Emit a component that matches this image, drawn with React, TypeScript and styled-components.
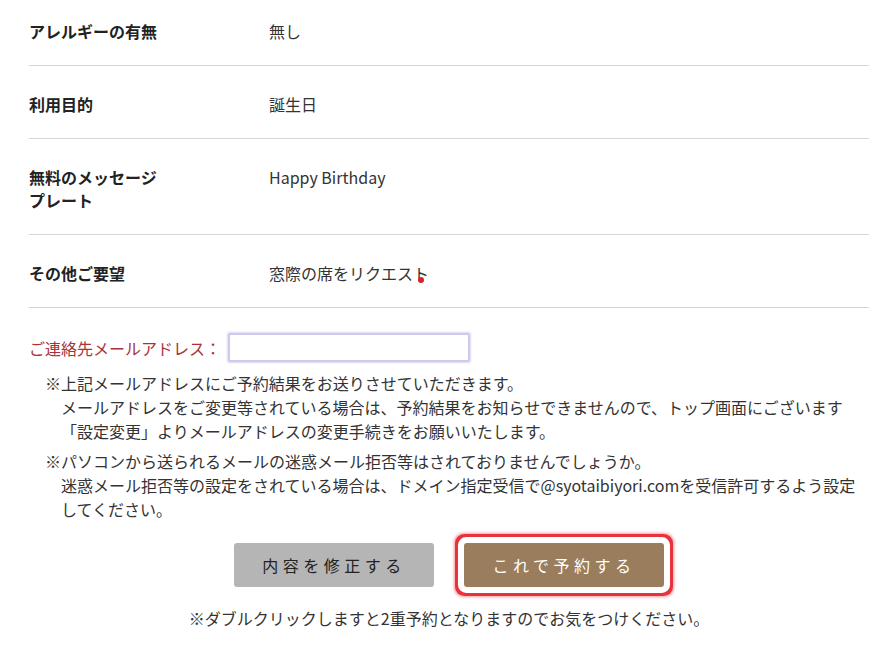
import React from 'react'
import styled, { createGlobalStyle } from 'styled-components'

const GlobalStyle = createGlobalStyle`
  html, body {
    margin: 0;
    padding: 0;
    background: #fff;
  }
  body {
    font-family: "Noto Sans CJK JP", "Noto Sans", "Liberation Sans", sans-serif;
    color: #333;
    font-size: 16px;
  }
`

const Page = styled.div`
  width: 895px;
  padding: 0 26px 0 29px;
  box-sizing: border-box;
`

const Table = styled.div`
  display: flex;
  flex-direction: column;
`

const Row = styled.div<{ $first?: boolean }>`
  display: grid;
  grid-template-columns: 240px 1fr;
  padding: ${p => (p.$first ? '20px' : '27px')} 0 22px;
  border-bottom: 1px solid #d6d6d6;
  line-height: 23px;
`

const Label = styled.div`
  width: 136px;
  font-weight: bold;
  color: #222;
  font-size: 16px;
`

const Value = styled.div`
  color: #333;
  font-size: 16px;
`

const Dot = styled.span`
  display: inline-block;
  width: 6px;
  height: 6px;
  border-radius: 50%;
  background: #d8232a;
  margin-left: -11px;
  vertical-align: -3px;
`

const EmailRow = styled.div`
  display: flex;
  align-items: center;
  margin-top: 25px;
`

const EmailLabel = styled.span`
  color: #a8323a;
  font-size: 16px;
  width: 199px;
`

const EmailBox = styled.div`
  width: 238px;
  height: 25px;
  border: 2px solid #cfc9ec;
  box-shadow: 0 0 2px 1px #ddd8f4;
  border-radius: 2px;
`

const Notes = styled.div`
  margin-top: 9px;
  display: flex;
  flex-direction: column;
  gap: 6px;
`

const Note = styled.p`
  margin: 0;
  padding-left: 32px;
  text-indent: -16px;
  line-height: 24px;
  font-size: 16px;
  color: #333;
`

const Buttons = styled.div`
  display: flex;
  justify-content: center;
  gap: 30px;
  margin-top: 22px;
`

const Button = styled.button<{ $primary?: boolean }>`
  width: 200px;
  height: 44px;
  border: none;
  border-radius: 3px;
  font-family: inherit;
  font-size: 16px;
  letter-spacing: 4.5px;
  background: ${p => (p.$primary ? '#9a7d5c' : '#b5b5b5')};
  color: ${p => (p.$primary ? '#fff' : '#222')};
  box-shadow: ${p => (p.$primary ? '0 0 0 6px #fff, 0 0 0 9px #e8323c, 0 0 3px 10px #f39aa0' : 'none')};
  cursor: pointer;
`

const Footnote = styled.p`
  margin: 19px 0 0;
  text-align: center;
  font-size: 16px;
  color: #333;
  line-height: 24px;
`

const rows = [
  { label: 'アレルギーの有無', value: '無し' },
  { label: '利用目的', value: '誕生日' },
  { label: '無料のメッセージプレート', value: 'Happy Birthday' },
  { label: 'その他ご要望', value: '窓際の席をリクエスト', dot: true },
]

export default function App() {
  return (
    <Page>
      <GlobalStyle />
      <Table>
        {rows.map((r, i) => (
          <Row key={r.label} $first={i === 0}>
            <Label>{r.label}</Label>
            <Value>
              {r.value}
              {r.dot && <Dot />}
            </Value>
          </Row>
        ))}
      </Table>
      <EmailRow>
        <EmailLabel>ご連絡先メールアドレス：</EmailLabel>
        <EmailBox />
      </EmailRow>
      <Notes>
        <Note>
          ※上記メールアドレスにご予約結果をお送りさせていただきます。
          <br />
          メールアドレスをご変更等されている場合は、予約結果をお知らせできませんので、トップ画面にございます「設定変更」よりメールアドレスの変更手続きをお願いいたします。
        </Note>
        <Note>
          ※パソコンから送られるメールの迷惑メール拒否等はされておりませんでしょうか。
          <br />
          迷惑メール拒否等の設定をされている場合は、ドメイン指定受信で@syotaibiyori.comを受信許可するよう設定してください。
        </Note>
      </Notes>
      <Buttons>
        <Button>内容を修正する</Button>
        <Button $primary>これで予約する</Button>
      </Buttons>
      <Footnote>※ダブルクリックしますと2重予約となりますのでお気をつけください。</Footnote>
    </Page>
  )
}
